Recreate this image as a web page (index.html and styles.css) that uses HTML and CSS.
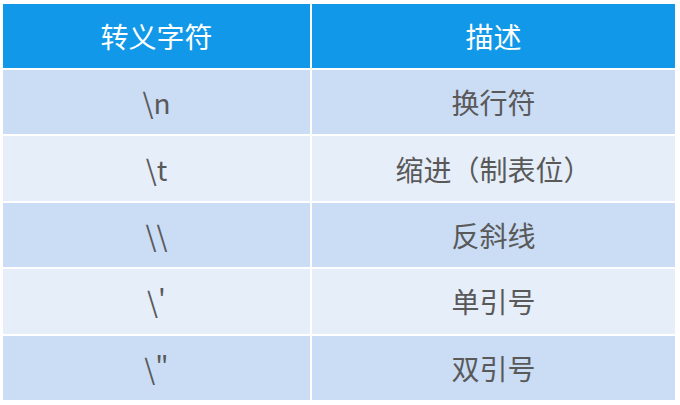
FILE: index.html
```html
<!DOCTYPE html>
<html lang="zh-CN">
<head>
<meta charset="utf-8">
<link rel="stylesheet" href="styles.css">
</head>
<body>
<div class="table">
  <div class="cell head">转义字符</div>
  <div class="cell head">描述</div>
  <div class="cell dark">\n</div>
  <div class="cell dark">换行符</div>
  <div class="cell light">\t</div>
  <div class="cell light">缩进（制表位）</div>
  <div class="cell dark">\\</div>
  <div class="cell dark">反斜线</div>
  <div class="cell light">\'</div>
  <div class="cell light">单引号</div>
  <div class="cell dark">\"</div>
  <div class="cell dark">双引号</div>
</div>
</body>
</html>
```
FILE: styles.css
```css
html, body {
  margin: 0;
  padding: 0;
  background: #ffffff;
}
body {
  padding: 4px 0 0 3px;
  font-family: "Noto Sans CJK SC", "Noto Sans", sans-serif;
}
.table {
  width: 672px;
  height: 396px;
  display: grid;
  grid-template-columns: 307px 1fr;
  grid-template-rows: 64px repeat(5, 1fr);
  column-gap: 2px;
  row-gap: 2px;
  background: #ffffff;
}
.cell {
  display: flex;
  align-items: center;
  justify-content: center;
  font-size: 28px;
  color: #595959;
  line-height: 1;
}
.head {
  background: #1298e8;
  color: #ffffff;
}
.dark {
  background: #cbdcf5;
}
.light {
  background: #e6eef9;
}
```
